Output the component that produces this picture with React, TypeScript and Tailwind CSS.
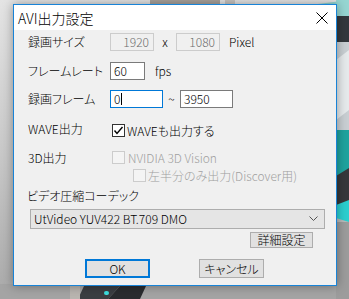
import React from "react";

const font = "[font-family:'Noto_Sans_CJK_JP','Noto_Sans',sans-serif] [font-feature-settings:'palt'] font-light";

function Backdrop() {
  return (
    <svg className="absolute inset-0" width="349" height="299" viewBox="0 0 349 299">
      <defs>
        <linearGradient id="lg" x1="0" y1="0" x2="0" y2="1">
          <stop offset="0" stopColor="#e4e4e4" />
          <stop offset="0.5" stopColor="#c9c9c9" />
          <stop offset="1" stopColor="#a9a9a9" />
        </linearGradient>
      </defs>
      <rect width="349" height="299" fill="url(#lg)" />
      <rect x="0" y="284" width="349" height="15" fill="#a4a4a4" />
      {/* top strip bits */}
      <rect x="150" y="0" width="70" height="4" fill="#a9a29c" />
      <rect x="225" y="0" width="10" height="4" fill="#c8c4c0" />
      <polygon points="318,4 349,0 349,10" fill="#8fd3cf" />
      {/* right strip */}
      <rect x="336" y="0" width="13" height="16" fill="#96d6d2" />
      <rect x="336" y="16" width="13" height="26" fill="#33383d" />
      <rect x="336" y="42" width="13" height="88" fill="#c9cfd3" />
      <polygon points="336,60 349,50 349,110 336,120" fill="#e6eaec" />
      <rect x="336" y="130" width="13" height="46" fill="#1fa39e" />
      <polygon points="336,176 349,168 349,205 336,205" fill="#36383b" />
      <polygon points="336,205 349,200 349,222 336,218" fill="#2bcfcf" />
      <rect x="336" y="222" width="13" height="77" fill="#9c9c9c" />
      {/* bottom shapes */}
      <polygon points="78,299 84,286 120,286 108,299" fill="#3b3e42" />
      <polygon points="108,299 120,286 146,286 140,299" fill="#2a2c2f" />
      <rect x="104" y="291" width="5" height="4" rx="2" fill="#3de0e0" />
      <rect x="70" y="286" width="10" height="13" fill="#b9b5b0" />
    </svg>
  );
}

function Field({ w, value, disabled, focus }: { w: string; value: string; disabled?: boolean; focus?: boolean }) {
  const border = focus ? "border-[#0078d7]" : disabled ? "border-[#cccccc]" : "border-[#7a7a7a]";
  return (
    <div
      className={`${w} h-[18px] border ${border} ${disabled ? "bg-[#f0f0f0] text-[#6d6d6d] justify-end pr-[4px]" : "bg-white text-black pl-[3px]"} flex items-center text-[12px] leading-none`}
    >
      {value}
      {focus && <span className="w-px h-[12px] bg-black ml-px" />}
    </div>
  );
}

function Box({ checked, disabled }: { checked?: boolean; disabled?: boolean }) {
  return (
    <div
      className={`w-[13px] h-[13px] border flex items-center justify-center ${disabled ? "border-[#cccccc] bg-[#f4f4f4]" : "border-[#333333] bg-white"}`}
    >
      {checked && (
        <svg width="11" height="11" viewBox="0 0 11 11">
          <polyline points="1.5,5.5 4,8.5 9.5,2" fill="none" stroke="#000" strokeWidth="1.4" />
        </svg>
      )}
    </div>
  );
}

export default function App() {
  return (
    <div className={`w-[349px] h-[299px] relative overflow-hidden ${font}`}>
      <Backdrop />
      <div className="relative pl-[13px] pt-[4px]">
        <div className="w-[324px] h-[282px] border border-[#1883d7] bg-[#f0f0f0] flex flex-col shadow-[0_0_10px_rgba(0,0,0,0.35)]">
          <div className="h-[25px] bg-white flex items-center justify-between pl-[4px] pr-[8px]">
            <span className="text-[14px] leading-none text-black">AVI出力設定</span>
            <svg width="12" height="12" viewBox="0 0 12 12">
              <path d="M0.5 0.5 L11.5 11.5 M11.5 0.5 L0.5 11.5" stroke="#000" strokeWidth="1" />
            </svg>
          </div>
          <div className="flex-1 pl-[14px] flex flex-col text-[12px] text-black leading-none">
            <div className="mt-[3px] h-[18px] flex items-center">
              <span className="w-[82px]">録画サイズ</span>
              <Field w="w-[44px]" value="1920" disabled />
              <span className="w-[22px] text-center">x</span>
              <Field w="w-[44px]" value="1080" disabled />
              <span className="ml-[9px]">Pixel</span>
            </div>
            <div className="mt-[11px] h-[18px] flex items-center">
              <span className="w-[82px]">フレームレート</span>
              <Field w="w-[35px]" value="60" />
              <span className="ml-[10px]">fps</span>
            </div>
            <div className="mt-[10px] h-[18px] flex items-center">
              <span className="w-[82px]">録画フレーム</span>
              <Field w="w-[53px]" value="0" focus />
              <span className="w-[17px] text-center">~</span>
              <Field w="w-[53px]" value="3950" />
            </div>
            <div className="mt-[15px] h-[15px] flex items-center">
              <span className="w-[84px] self-start">WAVE出力</span>
              <Box checked />
              <span className="ml-[2px]">WAVEも出力する</span>
            </div>
            <div className="mt-[13px] h-[13px] flex items-center">
              <span className="w-[84px]">3D出力</span>
              <Box disabled />
              <span className="ml-[3px] text-[#a0a0a0]">NVIDIA 3D Vision</span>
            </div>
            <div className="mt-[5px] h-[13px] flex items-center">
              <span className="w-[105px]" />
              <Box disabled />
              <span className="ml-[2px] text-[#a0a0a0]">左半分のみ出力(Discover用)</span>
            </div>
            <div className="mt-[7px] h-[13px] flex items-center -ml-px">ビデオ圧縮コーデック</div>
            <div className="mt-[7px] ml-[2px] w-[295px] h-[20px] border border-[#adadad] bg-[#e5e5e5] flex items-center justify-between pl-[3px] pr-[6px]">
              <span>UtVideo YUV422 BT.709 DMO</span>
              <svg width="9" height="6" viewBox="0 0 9 6">
                <polyline points="0.5,0.5 4.5,4.5 8.5,0.5" fill="none" stroke="#555" strokeWidth="1" />
              </svg>
            </div>
            <div className="mt-[3px] ml-[222px] w-[63px] h-[16px] border border-[#adadad] bg-[#e1e1e1] flex items-center justify-center">
              詳細設定
            </div>
            <div className="mt-[11px] ml-[57px] flex items-center gap-[49px]">
              <div className="w-[65px] h-[19px] border-2 border-[#0078d7] bg-[#e1e1e1] flex items-center justify-center">OK</div>
              <div className="w-[65px] h-[19px] border border-[#adadad] bg-[#e1e1e1] flex items-center justify-center">キャンセル</div>
            </div>
          </div>
        </div>
      </div>
    </div>
  );
}
